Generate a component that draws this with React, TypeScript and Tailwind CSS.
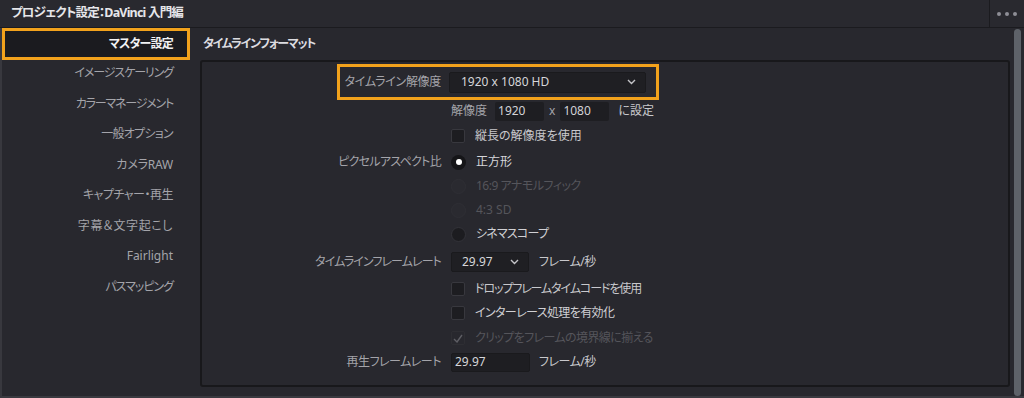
const font = "font-['Noto_Sans','Noto_Sans_CJK_JP',sans-serif] [font-feature-settings:'palt']"

const menu: [string, string][] = [
  ['イメージスケーリング', 'tracking-[-1.1px]'],
  ['カラーマネージメント', 'tracking-[-1.2px]'],
  ['一般オプション', 'tracking-[-0.7px]'],
  ['カメラRAW', 'tracking-[-0.2px]'],
  ['キャプチャー・再生', 'tracking-[-0.5px]'],
  ['字幕＆文字起こし', 'tracking-[0.6px]'],
  ['Fairlight', ''],
  ['パスマッピング', 'tracking-[-1px]'],
]

function Chevron() {
  return (
    <svg width="9" height="6" viewBox="0 0 9 6" className="shrink-0">
      <polyline points="1,1 4.5,4.5 8,1" fill="none" stroke="#c4c4c8" strokeWidth="1.4" />
    </svg>
  )
}

function Checkbox({ disabled, checked }: { disabled?: boolean; checked?: boolean }) {
  return (
    <span
      className={
        disabled
          ? 'flex h-[14px] w-[14px] items-center justify-center rounded-[2px] border border-[#2e2e33]'
          : 'flex h-[14px] w-[14px] items-center justify-center rounded-[2px] border border-[#38383e] bg-[#1d1d21]'
      }
    >
      {checked && (
        <svg width="10" height="9" viewBox="0 0 10 9">
          <polyline points="1,5 4,8 9,1" fill="none" stroke="#5e5e64" strokeWidth="1.4" />
        </svg>
      )}
    </span>
  )
}

function Radio({ state }: { state: 'on' | 'off' | 'disabled' }) {
  if (state === 'on')
    return (
      <span className="flex h-[15px] w-[15px] items-center justify-center rounded-full bg-[#151518]">
        <span className="h-[6px] w-[6px] rounded-full bg-white" />
      </span>
    )
  if (state === 'disabled')
    return <span className="h-[15px] w-[15px] rounded-full border border-[#2f2f35] bg-[#2a2a30]" />
  return <span className="h-[15px] w-[15px] rounded-full border border-[#333339] bg-[#1c1c20]" />
}

function Row({ label, track = '', h, children }: { label?: string; track?: string; h: string; children: React.ReactNode }) {
  return (
    <div className={`flex items-center ${h}`}>
      <div className={`w-[249px] shrink-0 pr-[10px] text-right text-[#a4a4aa] ${track}`}>{label}</div>
      <div className="flex items-center">{children}</div>
    </div>
  )
}

export default function App() {
  return (
    <div className={`flex h-[398px] w-[1024px] flex-col bg-[#28282e] text-[12px] leading-none ${font}`}>
      <header className="flex h-[28px] shrink-0 items-center border-b border-[#1b1b1f] bg-[#29292f]">
        <div className="flex-1 pl-[11px] text-[12.5px] font-bold tracking-[-0.8px] text-[#e6e6ea]">
          プロジェクト設定：DaVinci 入門編
        </div>
        <div className="flex h-full w-[35px] items-center justify-center gap-[4px] border-l border-[#1b1b1f]">
          <span className="h-[4px] w-[4px] rounded-full bg-[#8e8e96]" />
          <span className="h-[4px] w-[4px] rounded-full bg-[#8e8e96]" />
          <span className="h-[4px] w-[4px] rounded-full bg-[#8e8e96]" />
        </div>
      </header>

      <div className="flex min-h-0 flex-1 border-b-2 border-l-2 border-b-[#3a3a40] border-l-[#38383e]">
        <nav className="w-[188px] shrink-0">
          <div className="flex h-[32px] items-center justify-end border-[3px] border-[#f2a21c] bg-[#1b1b1f] pr-[14px] font-bold tracking-[-0.8px] text-[#f2f2f4]">
            マスター設定
          </div>
          <div className="-mt-[2px]">
            {menu.map(([m, t]) => (
              <div key={m} className={`flex h-[30.5px] items-center justify-end pr-[17px] text-[#a4a4aa] ${t}`}>
                {m}
              </div>
            ))}
          </div>
        </nav>

        <main className="flex min-w-0 flex-1 flex-col pb-[9px] pl-[10px]">
          <div className="flex h-[32px] shrink-0 items-center pl-[3px] font-bold tracking-[-1.3px] text-[#dcdce0]">
            タイムラインフォーマット
          </div>
          <section className="flex-1 rounded-[3px] border-2 border-[#18181b]">
            <div className="mt-[2px] ml-[135px] flex h-[36px] w-[322px] items-center border-[3px] border-[#f2a21c]">
              <div className="flex-1 pr-[8px] text-right tracking-[-0.3px] text-[#a4a4aa]">タイムライン解像度</div>
              <div className="mr-[10px] flex h-[21px] w-[197px] items-center justify-between rounded-[2px] border border-[#1a1a1d] bg-[#1f1f23] pr-[9px] pl-[11px] text-[#d6d6da]">
                <span>1920 x 1080 HD</span>
                <Chevron />
              </div>
            </div>

            <Row h="h-[22px]">
              <span className="text-[#a4a4aa]">解像度</span>
              <span className="ml-[8px] flex h-[19px] w-[49px] items-center rounded-[2px] bg-[#1e1e22] pl-[3px] text-[#d2d2d6]">1920</span>
              <span className="mx-[5px] text-[#a4a4aa]">x</span>
              <span className="flex h-[19px] w-[49px] items-center rounded-[2px] bg-[#1e1e22] pl-[3px] text-[#d2d2d6]">1080</span>
              <span className="ml-[9px] text-[#c8c8cc]">に設定</span>
            </Row>
            <Row h="h-[28px]">
              <Checkbox />
              <span className="ml-[10px] text-[#c8c8cc]">縦長の解像度を使用</span>
            </Row>
            <Row label="ピクセルアスペクト比" track="tracking-[-0.7px]" h="h-[24px]">
              <Radio state="on" />
              <span className="ml-[10px] text-[#d6d6da]">正方形</span>
            </Row>
            <Row h="h-[24px]">
              <Radio state="disabled" />
              <span className="ml-[10px] tracking-[-0.5px] text-[#55555b]">16:9 アナモルフィック</span>
            </Row>
            <Row h="h-[24px]">
              <Radio state="disabled" />
              <span className="ml-[10px] text-[#55555b]">4:3 SD</span>
            </Row>
            <Row h="h-[24px]">
              <Radio state="off" />
              <span className="ml-[10px] tracking-[-0.8px] text-[#d0d0d4]">シネマスコープ</span>
            </Row>
            <Row label="タイムラインフレームレート" track="tracking-[-0.9px]" h="h-[32px]">
              <div className="flex h-[20px] w-[78px] items-center justify-between rounded-[2px] border border-[#1a1a1d] bg-[#1f1f23] pr-[9px] pl-[10px] text-[#d6d6da]">
                <span>29.97</span>
                <Chevron />
              </div>
              <span className="ml-[10px] tracking-[-0.5px] text-[#c8c8cc]">フレーム/秒</span>
            </Row>
            <Row h="h-[22px]">
              <Checkbox />
              <span className="ml-[10px] tracking-[-1.1px] text-[#c8c8cc]">ドロップフレームタイムコードを使用</span>
            </Row>
            <Row h="h-[26px]">
              <Checkbox />
              <span className="ml-[10px] tracking-[-0.6px] text-[#d0d0d4]">インターレース処理を有効化</span>
            </Row>
            <Row h="h-[24px]">
              <Checkbox disabled checked />
              <span className="ml-[10px] tracking-[-0.6px] text-[#55555b]">クリップをフレームの境界線に揃える</span>
            </Row>
            <Row label="再生フレームレート" track="tracking-[-0.5px]" h="h-[24px]">
              <span className="flex h-[19px] w-[79px] items-center rounded-[2px] border border-[#1a1a1d] bg-[#1e1e22] pl-[3px] text-[#d6d6da]">
                29.97
              </span>
              <span className="ml-[9px] tracking-[-0.5px] text-[#c8c8cc]">フレーム/秒</span>
            </Row>
          </section>
        </main>

        <div className="flex w-[14px] shrink-0 justify-center pt-[1px]">
          <div className="w-[7px] rounded-full bg-[#5e6269]" />
        </div>
      </div>
    </div>
  )
}
